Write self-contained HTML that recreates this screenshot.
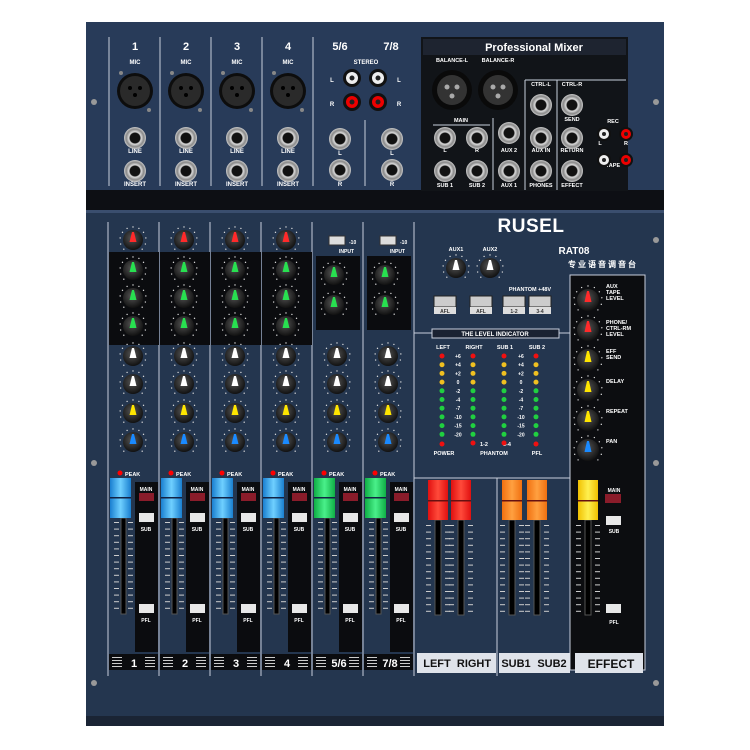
<!DOCTYPE html><html><head><meta charset="utf-8"><style>
body{margin:0;background:#fff;width:750px;height:750px;overflow:hidden}
svg{display:block}
text{font-family:"Liberation Sans",sans-serif;font-weight:bold}
</style></head><body>
<svg id="s" width="750" height="750" viewBox="0 0 750 750" xmlns="http://www.w3.org/2000/svg">
<defs>
<radialGradient id="kn" cx="45%" cy="40%" r="60%"><stop offset="0" stop-color="#555"/><stop offset="1" stop-color="#111"/></radialGradient>
<radialGradient id="jk" cx="50%" cy="50%" r="50%"><stop offset="0.45" stop-color="#111"/><stop offset="0.55" stop-color="#ddd"/><stop offset="0.8" stop-color="#888"/><stop offset="1" stop-color="#ccc"/></radialGradient>
<linearGradient id="blue" x1="0" x2="1"><stop offset="0" stop-color="#1a7fd0"/><stop offset=".5" stop-color="#6fd0ff"/><stop offset="1" stop-color="#1a7fd0"/></linearGradient>
<linearGradient id="green" x1="0" x2="1"><stop offset="0" stop-color="#0fae45"/><stop offset=".5" stop-color="#4af08a"/><stop offset="1" stop-color="#0fae45"/></linearGradient>
<linearGradient id="red" x1="0" x2="1"><stop offset="0" stop-color="#e01010"/><stop offset=".5" stop-color="#ff4a3a"/><stop offset="1" stop-color="#e01010"/></linearGradient>
<linearGradient id="orange" x1="0" x2="1"><stop offset="0" stop-color="#f07010"/><stop offset=".5" stop-color="#ffa040"/><stop offset="1" stop-color="#f07010"/></linearGradient>
<linearGradient id="yellow" x1="0" x2="1"><stop offset="0" stop-color="#f0c000"/><stop offset=".5" stop-color="#fff050"/><stop offset="1" stop-color="#f0c000"/></linearGradient>
</defs>
<rect x="86" y="22" width="578" height="704" fill="#24364f"/>
<rect x="86" y="22" width="578" height="170" fill="#283b59"/>
<rect x="86" y="190" width="578" height="20" fill="#0d0f14"/>
<rect x="86" y="210" width="578" height="3" fill="#3a4e6e"/>
<rect x="86" y="716" width="578" height="10" fill="#1a2434"/>
<g stroke="#c8cfdc" stroke-width="1">
<line x1="109" y1="37" x2="109" y2="186"/><line x1="160" y1="37" x2="160" y2="186"/><line x1="211" y1="37" x2="211" y2="186"/><line x1="262" y1="37" x2="262" y2="186"/><line x1="313" y1="37" x2="313" y2="186"/><line x1="365" y1="120" x2="365" y2="186"/>
</g>
<g fill="#fff" font-size="11" text-anchor="middle">
<text x="135" y="50">1</text><text x="186" y="50">2</text><text x="237" y="50">3</text><text x="288" y="50">4</text><text x="340" y="50">5/6</text><text x="391" y="50">7/8</text>
</g>
<g fill="#fff" font-size="6" text-anchor="middle" font-family="Liberation Serif">
<text x="135" y="64">MIC</text><text x="186" y="64">MIC</text><text x="237" y="64">MIC</text><text x="288" y="64">MIC</text><text x="366" y="64">STEREO</text>
<text x="135" y="153">LINE</text><text x="186" y="153">LINE</text><text x="237" y="153">LINE</text><text x="288" y="153">LINE</text>
<text x="135" y="186">INSERT</text><text x="186" y="186">INSERT</text><text x="237" y="186">INSERT</text><text x="288" y="186">INSERT</text>
<text x="340" y="155">L</text><text x="392" y="155">L</text><text x="340" y="186">R</text><text x="392" y="186">R</text>
<text x="332" y="82">L</text><text x="399" y="82">L</text><text x="332" y="106">R</text><text x="399" y="106">R</text>
</g>
<rect x="421" y="37" width="207" height="154" fill="#111418"/>
<rect x="423" y="39" width="203" height="16" fill="#1e2430"/>
<text x="534" y="51" fill="#fff" font-size="11" text-anchor="middle" font-family="Liberation Serif">Professional Mixer</text>
<g fill="#fff" font-size="5.5" text-anchor="middle" font-family="Liberation Serif">
<text x="452" y="62">BALANCE-L</text><text x="498" y="62">BALANCE-R</text>
<text x="461" y="122">MAIN</text><text x="445" y="152">L</text><text x="477" y="152">R</text>
<text x="445" y="187">SUB 1</text><text x="477" y="187">SUB 2</text>
<text x="509" y="152">AUX 2</text><text x="509" y="187">AUX 1</text>
<text x="541" y="86">CTRL-L</text><text x="541" y="152">AUX IN</text><text x="541" y="187">PHONES</text>
<text x="572" y="86">CTRL-R</text><text x="572" y="121">SEND</text><text x="572" y="152">RETURN</text><text x="572" y="187">EFFECT</text>
<text x="613" y="123">REC</text><text x="613" y="167">TAPE</text><text x="600" y="145">L</text><text x="626" y="145">R</text>
</g>
<g stroke="#c8cfdc" fill="none"><line x1="493" y1="118" x2="493" y2="190"/><line x1="525" y1="80" x2="525" y2="190"/><line x1="557" y1="80" x2="557" y2="190"/><line x1="525" y1="80" x2="626" y2="80"/><line x1="433" y1="125" x2="490" y2="125"/></g>
<text x="531" y="232" fill="#fff" font-size="19" text-anchor="middle" letter-spacing="0.5">RUSEL</text>
<text x="574" y="254" fill="#fff" font-size="10" text-anchor="middle">RAT08</text>
<text x="603" y="267" fill="#fff" font-size="8" font-weight="normal" text-anchor="middle" font-family="'Liberation Sans','Noto Sans CJK SC',sans-serif" letter-spacing="2">专业语音调音台</text>
<g fill="#fff" font-size="5.5" text-anchor="middle" font-family="Liberation Serif">
<text x="456" y="251">AUX1</text><text x="490" y="251">AUX2</text><text x="530" y="291">PHANTOM +48V</text>
</g>
<rect x="432" y="329" width="127" height="9" fill="#1a2232" stroke="#c8cfdc"/>
<line x1="414" y1="333" x2="432" y2="333" stroke="#c8cfdc"/><line x1="559" y1="333" x2="570" y2="333" stroke="#c8cfdc"/>
<text x="495" y="336" fill="#fff" font-size="6" text-anchor="middle" font-family="Liberation Serif">THE LEVEL INDICATOR</text>
<g fill="#fff" font-size="5.5" text-anchor="middle" font-family="Liberation Serif">
<text x="443" y="349">LEFT</text><text x="474" y="349">RIGHT</text><text x="505" y="349">SUB 1</text><text x="537" y="349">SUB 2</text>
<text x="444" y="455">POWER</text><text x="494" y="455">PHANTOM</text><text x="537" y="455">PFL</text>
<text x="484" y="446">1-2</text><text x="507" y="446">3-4</text>
</g>
<rect x="570" y="275" width="75" height="395" fill="#0c0d10" stroke="#c8cfdc" stroke-width="1"/>
<g fill="#fff" font-size="5.5" font-family="Liberation Serif">
<text x="606" y="288">AUX</text><text x="606" y="294">TAPE</text><text x="606" y="300">LEVEL</text>
<text x="606" y="324">PHONE/</text><text x="606" y="330">CTRL-RM</text><text x="606" y="336">LEVEL</text>
<text x="606" y="353">EFF</text><text x="606" y="359">SEND</text>
<text x="606" y="383">DELAY</text><text x="606" y="413">REPEAT</text><text x="606" y="443">PAN</text>
</g>
<rect x="417" y="653" width="79" height="20" fill="#dfe3ea"/>
<rect x="499" y="653" width="71" height="20" fill="#dfe3ea"/>
<rect x="575" y="653" width="68" height="20" fill="#dfe3ea"/>
<g fill="#111" font-size="11" font-weight="normal" text-anchor="middle">
<text x="437" y="667">LEFT</text><text x="474" y="667">RIGHT</text><text x="516" y="667">SUB1</text><text x="552" y="667">SUB2</text><text x="611" y="668" font-size="12">EFFECT</text>
</g>
<g fill="#fff" font-size="5.5" font-family="Liberation Serif">
<text x="339" y="253" font-size="5">INPUT</text><text x="390" y="253" font-size="5">INPUT</text>
<text x="349" y="244" font-size="5">-10</text><text x="400" y="244" font-size="5">-10</text>
</g>
<g id="dyn"></g>
<g fill="#fff" font-size="11" text-anchor="middle">
<text x="134" y="667">1</text><text x="185" y="667">2</text><text x="236" y="667">3</text><text x="287" y="667">4</text><text x="339" y="667">5/6</text><text x="390" y="667">7/8</text>
</g>
<g fill="#fff" font-size="5.5" font-family="Liberation Serif">
<text x="125" y="476">PEAK</text><text x="176" y="476">PEAK</text><text x="227" y="476">PEAK</text><text x="278" y="476">PEAK</text><text x="329" y="476">PEAK</text><text x="380" y="476">PEAK</text>
</g>
</svg>
<script>
var g=document.getElementById('dyn'),h='';
function r(x,y,w,hh,f,extra){h+='<rect x="'+x+'" y="'+y+'" width="'+w+'" height="'+hh+'" fill="'+f+'" '+(extra||'')+'/>';}
function c(x,y,rr,f,extra){h+='<circle cx="'+x+'" cy="'+y+'" r="'+rr+'" fill="'+f+'" '+(extra||'')+'/>';}
function knob(x,y,col,rr){rr=rr||10;
 for(var i=0;i<11;i++){var a=(-135+i*27)*Math.PI/180;c(x+Math.sin(a)*(rr+3),y-Math.cos(a)*(rr+3),0.7,'#ddd');}
 c(x,y,rr,'url(#kn)');h+='<polygon points="'+(x-3.5)+','+(y+2)+' '+(x+3.5)+','+(y+2)+' '+(x+1)+','+(y-rr+2)+' '+(x-1)+','+(y-rr+2)+'" fill="'+col+'"/>';}
var xs=[135,186,237,288];
xs.forEach(function(x){c(x,91,18,'#0d0d0d');c(x,91,15,'#2a2a2a');c(x-5,88,2,'#000');c(x+5,88,2,'#000');c(x,95,2,'#000');
 c(x-14,73,2,'#888');c(x+14,110,2,'#888');c(x,138,11,'url(#jk)');c(x,171,11,'url(#jk)');});
[340,392].forEach(function(x){c(x,139,11,'url(#jk)');c(x,170,11,'url(#jk)');});
[[352,78,'#eee'],[378,78,'#eee'],[352,102,'#e00'],[378,102,'#e00']].forEach(function(p){c(p[0],p[1],9,'#111');c(p[0],p[1],6,p[2]);c(p[0],p[1],2.5,'#222');});
[[609,131,'#eee'],[631,131,'#e00'],[609,157,'#eee'],[631,157,'#e00']].forEach(function(p){c(p[0]-5,p[1]+3,7,'#111');c(p[0]-5,p[1]+3,5,p[2]);c(p[0]-5,p[1]+3,2,'#222');});
[[452,90],[498,90]].forEach(function(p){c(p[0],p[1],20,'#0a0a0a');c(p[0],p[1],15,'#333');c(p[0]-5,p[1]-3,2.5,'#aaa');c(p[0]+5,p[1]-3,2.5,'#aaa');c(p[0],p[1]+6,2.5,'#aaa');});
[[445,138],[477,138],[445,171],[477,171],[509,133],[509,171],[541,105],[541,138],[541,171],[572,105],[572,138],[572,171]].forEach(function(p){c(p[0],p[1],11,'url(#jk)');});
[[94,102],[94,463],[94,683],[656,102],[656,240],[656,463],[656,683]].forEach(function(p){c(p[0],p[1],3,'#999');});
var ch=[108,159,210,261,312,363];
ch.forEach(function(x,i){h+='<line x1="'+x+'" y1="222" x2="'+x+'" y2="676" stroke="#c8cfdc"/>';});
h+='<line x1="414" y1="222" x2="414" y2="676" stroke="#c8cfdc"/>';
for(var i=0;i<4;i++){var x=ch[i];r(x+1,252,50,93,'#0b0c0f');
 knob(x+25,240,'#ff2a2a');knob(x+25,270,'#28e050');knob(x+25,298,'#28e050');knob(x+25,326,'#28e050');
 knob(x+25,356,'#fff');knob(x+25,384,'#fff');knob(x+25,413,'#ffe600');knob(x+25,442,'#1a8aff');}
for(var i=4;i<6;i++){var x=ch[i];r(x+4,256,44,74,'#0b0c0f');r(x+17,236,16,9,'#ddd','stroke="#333"');
 knob(x+22,275,'#28e050');knob(x+22,305,'#28e050');knob(x+25,356,'#fff');knob(x+25,384,'#fff');knob(x+25,413,'#ffe600');knob(x+25,442,'#1a8aff');}
var caps=['blue','blue','blue','blue','green','green'];
ch.forEach(function(x,i){
 c(x+12,473,2.5,'#f00');
 r(x+27,482,23,170,'#0b0c0f');r(x+31,493,15,8,'#8a1c2a');r(x+31,513,15,9,'#e8e8e8');r(x+31,604,15,9,'#e8e8e8');
 h+='<text x="'+(x+38)+'" y="491" fill="#fff" font-size="5" text-anchor="middle">MAIN</text><text x="'+(x+38)+'" y="531" fill="#fff" font-size="5" text-anchor="middle">SUB</text><text x="'+(x+38)+'" y="622" fill="#fff" font-size="5" text-anchor="middle">PFL</text>';
 for(var k=0;k<14;k++){r(x+6,522+k*6.6,5,1,'#ccc');r(x+20,522+k*6.6,5,1,'#ccc');}
 r(x+13,518,5,96,'#000','stroke="#555"');
 r(x+2,478,21,40,'url(#'+caps[i]+')');r(x+2,497,21,1.5,'#124');
 r(x+1,654,49,16,'#0b0c0f');for(var k=0;k<4;k++){r(x+4,657+k*3,10,1,'#ccc');r(x+37,657+k*3,10,1,'#ccc');}
});
h+='<line x1="414" y1="478" x2="570" y2="478" stroke="#c8cfdc"/><line x1="497" y1="478" x2="497" y2="676" stroke="#c8cfdc"/>';
[[428,'red'],[451,'red'],[502,'orange'],[527,'orange'],[578,'yellow']].forEach(function(p){var x=p[0];
 for(var k=0;k<14;k++){r(x-2,525+k*6.6,5,1,'#ccc');r(x+17,525+k*6.6,5,1,'#ccc');}
 r(x+7,520,6,95,'#000','stroke="#555"');r(x,480,20,40,'url(#'+p[1]+')');r(x,500,20,1.5,'#611');});
r(605,494,16,9,'#8a1c2a');r(606,516,15,9,'#e8e8e8');r(606,604,15,9,'#e8e8e8');
h+='<text x="614" y="492" fill="#fff" font-size="5" text-anchor="middle">MAIN</text><text x="614" y="533" fill="#fff" font-size="5" text-anchor="middle">SUB</text><text x="614" y="624" fill="#fff" font-size="5" text-anchor="middle">PFL</text>';
knob(456,268,'#fff',10);knob(490,268,'#fff',10);
[[445,'AFL'],[481,'AFL'],[514,'1-2'],[540,'3-4']].forEach(function(p){r(p[0]-11,296,22,11,'#ccc','stroke="#222"');r(p[0]-11,307,22,7,'#ddd');h+='<text x="'+p[0]+'" y="313" font-size="5" text-anchor="middle" fill="#333">'+p[1]+'</text>';});
var lv=['+6','+4','+2','0','-2','-4','-7','-10','-15','-20'];
lv.forEach(function(t,k){var y=356+k*8.7;var col=k==0?'#f01010':(k<4?'#f0c020':'#20d040');
 [443,474,505,537].forEach(function(x){c(x-1,y,2.5,col);});
 h+='<text x="458" y="'+(y+2)+'" fill="#fff" font-size="5" text-anchor="middle">'+t+'</text><text x="521" y="'+(y+2)+'" fill="#fff" font-size="5" text-anchor="middle">'+t+'</text>';});
[[443,444],[474,443],[505,443],[537,444]].forEach(function(p){c(p[0]-1,p[1],2.5,'#f01010');});
knob(588,300,'#ff2a2a',11);knob(588,330,'#ff2a2a',11);knob(588,360,'#ffe600',11);knob(588,390,'#ffe600',11);knob(588,420,'#ffe600',11);knob(588,450,'#1a8aff',11);
g.innerHTML=h;
</script>
</body></html>
